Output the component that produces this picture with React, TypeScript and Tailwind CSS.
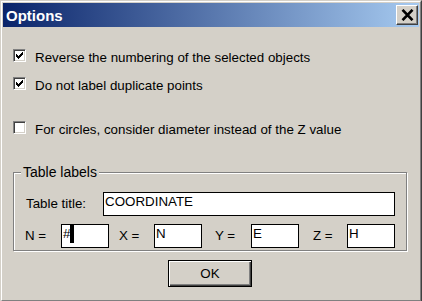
import React from 'react';

// classic 7x7 check glyph, one 3px run per column
const CHECK_COLS = [2, 3, 4, 3, 2, 1, 0];

function CheckBox({ checked }: { checked?: boolean }) {
    return (
        <span className="w-[13px] h-[13px] shrink-0 flex items-center justify-center bg-white border border-t-[#808080] border-l-[#808080] border-r-white border-b-white shadow-[inset_1px_1px_0_#404040,inset_-1px_-1px_0_#d4d0c8]">
            {checked && (
                <svg width="7" height="7" viewBox="0 0 7 7" shapeRendering="crispEdges">
                    {CHECK_COLS.map((y, x) => (
                        <rect key={x} x={x} y={y} width="1" height="3" fill="#000" />
                    ))}
                </svg>
            )}
        </span>
    );
}

function CheckRow({ checked, label, className = '' }: { checked?: boolean; label: string; className?: string }) {
    return (
        <div className={`flex items-start h-[13px] ${className}`}>
            <CheckBox checked={checked} />
            <span className="ml-[9px] mt-[1px] leading-[16px] whitespace-nowrap">{label}</span>
        </div>
    );
}

function Field({ value, width, caret }: { value: string; width: string; caret?: boolean }) {
    return (
        <div className={`${width} h-[24px] shrink-0 flex items-start px-[1px] bg-white border border-black`}>
            <span className="mt-[1px] leading-[16px] whitespace-nowrap">{value}</span>
            {caret && <span className="w-[4px] h-[18px] bg-black" />}
        </div>
    );
}

export default function App() {
    return (
        <div className="w-[422px] h-[301px] overflow-hidden bg-[#d4d0c8] font-['Liberation_Sans',Arial,sans-serif] text-[13.35px] text-black">
            <div className="h-[302px] border border-t-[#d4d0c8] border-l-[#d4d0c8] border-r-[#404040] border-b-[#404040]">
                <div className="h-full p-px border border-t-white border-l-white border-r-[#808080] border-b-[#808080]">
                    {/* Title bar */}
                    <div className="h-[24px] flex items-center bg-[linear-gradient(to_right,#0a246a,#a6caf0)]">
                        <span className="pl-[3px] text-[15px] font-bold text-white leading-none">Options</span>
                        <button className="ml-auto mr-[1px] w-[22px] h-[20px] flex items-center justify-center bg-[#d4d0c8] border border-t-white border-l-white border-r-[#404040] border-b-[#404040] shadow-[inset_-1px_-1px_0_#808080]">
                            <svg width="13" height="12" viewBox="0 0 13 12">
                                <path d="M1.5 0.8 L11.5 11.2 M11.5 0.8 L1.5 11.2" stroke="#000" strokeWidth="2.6" />
                            </svg>
                        </button>
                    </div>

                    <div className="px-[10px]">
                        <CheckRow className="mt-[22px]" checked label="Reverse the numbering of the selected objects" />
                        <CheckRow className="mt-[15px]" checked label="Do not label duplicate points" />
                        <CheckRow className="mt-[31px]" label="For circles, consider diameter instead of the Z value" />

                        {/* Table labels group */}
                        <div className="relative mt-[38px] w-[394px] h-[79px] border border-[#808080] shadow-[inset_1px_1px_0_#fff,1px_1px_0_#fff]">
                            <span className="absolute left-[7px] -top-[9px] px-[2px] bg-[#d4d0c8] leading-[16px] text-[14px]">Table labels</span>

                            <div className="pt-[19px] pl-[12px] flex items-center">
                                <span className="w-[77px] shrink-0">Table title:</span>
                                <Field value="COORDINATE" width="w-[292px]" />
                            </div>

                            <div className="mt-[8px] pl-[11px] flex items-center">
                                <span className="w-[36px] shrink-0">N =</span>
                                <Field value="#" width="w-[48px]" caret />
                                <span className="ml-[10px] w-[35px] shrink-0">X =</span>
                                <Field value="N" width="w-[48px]" />
                                <span className="ml-[13px] w-[36px] shrink-0">Y =</span>
                                <Field value="E" width="w-[48px]" />
                                <span className="ml-[14px] w-[34px] shrink-0">Z =</span>
                                <Field value="H" width="w-[48px]" />
                            </div>
                        </div>

                        <button className="mt-[9px] ml-[155px] w-[84px] h-[27px] block bg-[#d4d0c8] border border-black shadow-[inset_1px_1px_0_#fff,inset_-1px_-1px_0_#404040,inset_-2px_-2px_0_#808080] leading-none">
                            OK
                        </button>
                    </div>
                </div>
            </div>
        </div>
    );
}
